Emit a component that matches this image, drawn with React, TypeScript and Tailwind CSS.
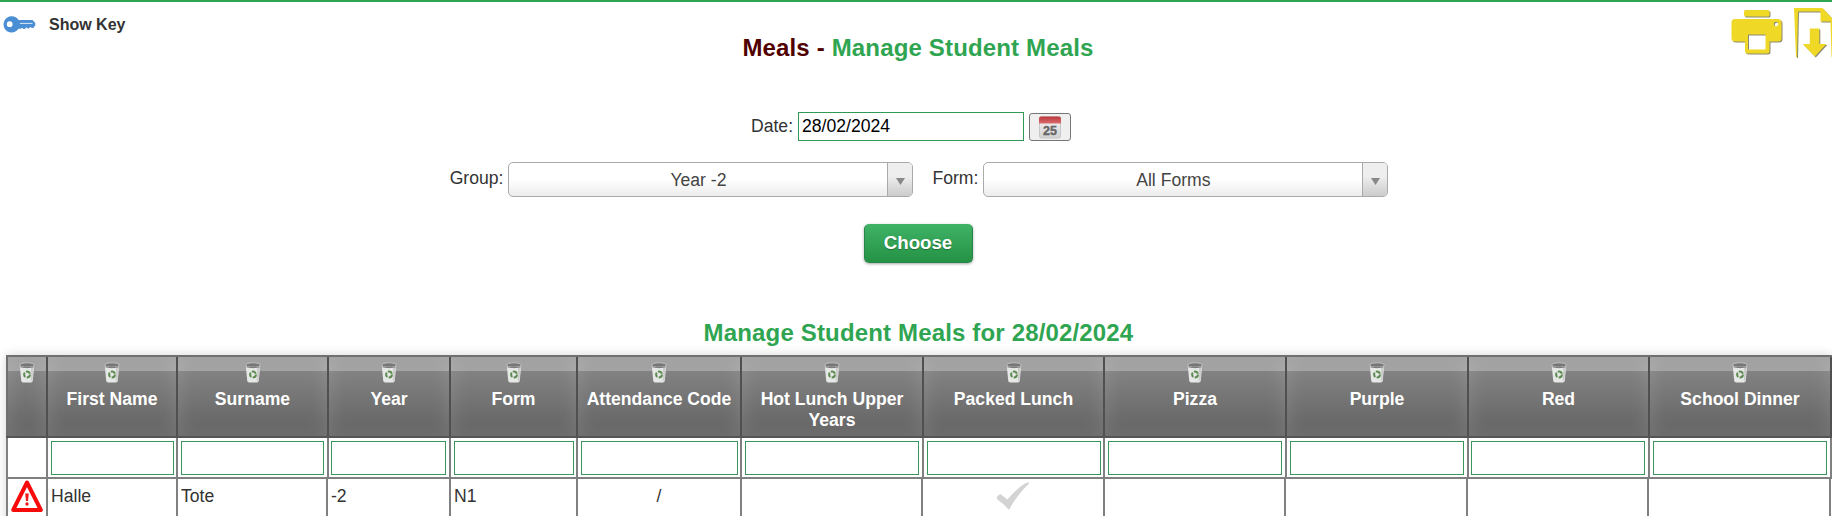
import { clsx } from "clsx";

const columns = [
  { title: "", value: "warning", filter: "" },
  { title: "First Name", value: "Halle", filter: "ml-[3px] mr-[2px]" },
  { title: "Surname", value: "Tote", filter: "mx-[3px]" },
  { title: "Year", value: "-2", filter: "ml-[2px] mr-[3px]" },
  { title: "Form", value: "N1", filter: "ml-[3px] mr-[2px]" },
  { title: "Attendance Code", value: "/", filter: "ml-[3px] mr-[2px]", center: true },
  { title: "Hot Lunch Upper Years", value: "", filter: "mx-[3px]" },
  { title: "Packed Lunch", value: "tick", filter: "ml-[3px] mr-[2px]", center: true },
  { title: "Pizza", value: "", filter: "mx-[3px]" },
  { title: "Purple", value: "", filter: "mx-[3px]" },
  { title: "Red", value: "", filter: "ml-[2px] mr-[3px]" },
  { title: "School Dinner", value: "", filter: "mx-[3px]" },
];

const headCols =
  "grid grid-cols-[40px_130px_151px_122px_127px_164px_182px_181px_182px_182px_181px_184px]";
const bodyCols =
  "grid grid-cols-[40px_130px_150px_123px_127px_164px_181px_182px_181px_182px_181px_184px]";

function KeyIcon() {
  return (
    <svg width="33" height="17" viewBox="0 0 33 17" fill="#4a8fd4">
      <path
        fillRule="evenodd"
        d="M8.3.3a8 8 0 0 1 7.2 3.7H29.500l2.800 3V9.300l-2 2.700h-1.500l-1.500-1-1.500 1.500h-1.200l-1.200-1.300-1.600 1.700h-1.400l-1.300-1.200-1.300 1H15.500A8.100 8.100 0 1 1 8.300.3ZM6.700 5.300a2.900 2.900 0 1 0 0 5.800 2.900 2.900 0 0 0 0-5.800Z"
      />
      <path d="M17 7.400h12.500" stroke="#dbe9f7" strokeWidth="1" />
    </svg>
  );
}

function PrinterIcon() {
  return (
    <svg width="52" height="47" viewBox="0 0 52 47" className="mt-[2px] drop-shadow-[1px_1px_0.500px_#8a8a70]">
      <g fill="#f0d926">
        <rect x="13" y="0" width="25.500" height="6.500" rx="1.500" />
        <path
          fillRule="evenodd"
          d="M4 9h43a3.500 3.500 0 0 1 3.500 3.500V28a3.500 3.500 0 0 1-3.500 3.500h-8.500V41a2.500 2.500 0 0 1-2.500 2.500H16.500A2.500 2.500 0 0 1 14 41v-9.500H4A3.500 3.500 0 0 1 .5 28V12.500A3.500 3.500 0 0 1 4 9Zm13 15.500V39.500h17.500v-15Zm28-12.700a2.200 2.200 0 1 0 0 4.400 2.200 2.200 0 0 0 0-4.400Z"
        />
      </g>
    </svg>
  );
}

function DownloadIcon() {
  return (
    <svg width="38" height="52" viewBox="0 0 38 52" className="drop-shadow-[1px_1px_0.500px_#8a8a70]">
      <g fill="#f0d926">
        <path d="M0 0h28.500l11 12v37h-2L36.500 13.500H26.500V3.500H4L3 49H2Z" />
        <path d="M15.800 20.500h9.500v15.500h7L20.800 48.500 8.800 36h7Z" />
      </g>
    </svg>
  );
}

function CalendarIcon() {
  return (
    <svg width="24" height="23" viewBox="0 0 24 23">
      <defs>
        <linearGradient id="calTop" x1="0" y1="0" x2="0" y2="1">
          <stop offset="0" stopColor="#b8383c" />
          <stop offset="1" stopColor="#dc6b6d" />
        </linearGradient>
        <linearGradient id="calPage" x1="0" y1="0" x2="0" y2="1">
          <stop offset="0" stopColor="#f6f6f6" />
          <stop offset="1" stopColor="#d2d2d2" />
        </linearGradient>
      </defs>
      <rect x="1.500" y="1" width="21" height="21" rx="2" fill="url(#calPage)" stroke="#c6c6c6" />
      <path d="M1 7.500V2.500Q1 .5 3 .5h18q2 0 2 2v5Z" fill="url(#calTop)" />
      <text
        x="12"
        y="19"
        textAnchor="middle"
        fontSize="12.500"
        fontWeight="700"
        fill="#666"
        stroke="#666"
        strokeWidth="0.400"
        fontFamily="Liberation Sans, sans-serif"
      >
        25
      </text>
    </svg>
  );
}

function BinIcon() {
  return (
    <svg width="16" height="21" viewBox="0 0 16 21" className="block">
      <path d="M.8 3.500 2.200 18.500q.2 2 2 2h7.600q1.800 0 2-2L15.200 3.500Z" fill="#e6e8e6" />
      <path d="M12 5h2.700l-1.300 13.500-1.600 1Z" fill="#cbcdcb" />
      <ellipse cx="8" cy="3" rx="7.400" ry="2.200" fill="#777" stroke="#c4c4c4" strokeWidth="0.900" />
      <path d="M1.500 4.900q6.500 1.600 13 0" stroke="#777" fill="none" />
      <circle cx="8" cy="12.500" r="2.900" fill="none" stroke="#5c8a50" strokeWidth="2" strokeDasharray="4.800 1.270" />
    </svg>
  );
}

function WarningIcon() {
  return (
    <svg width="32" height="33" viewBox="0 0 32 33" className="block">
      <path d="M16 2.500 29.800 30H2.200Z" fill="#fff" stroke="#f60a0a" strokeWidth="4" strokeLinejoin="round" />
      <path d="M14.200 13.500h3.600l-.8 7.500h-2Z" fill="#f01818" />
      <circle cx="16" cy="24" r="1.700" fill="#f01818" />
    </svg>
  );
}

function TickIcon() {
  return (
    <svg width="32" height="28" viewBox="0 0 32 28" className="block">
      <path d="M0 14.500 3.300 12 10.500 17.500Q18 8 28 1.500L32 0 31.500 2Q20 13 12 28Q6.500 21.500 0 17Z" fill="#d3d3d3" />
    </svg>
  );
}

function Select({ value }: { value: string }) {
  return (
    <div className="flex h-[35px] w-[405px] overflow-hidden rounded-[5px] border border-[#aaa] bg-gradient-to-b from-white from-50% to-[#ececec] text-[#444]">
      <div className="flex flex-1 items-center justify-center pt-px">{value}</div>
      <div className="flex w-[25px] items-center justify-center border-l border-[#aaa] bg-gradient-to-b from-[#eee] from-40% to-[#ccc] pt-[3px]">
        <svg width="9" height="7" viewBox="0 0 9 7">
          <path d="M0 0h9L4.500 7Z" fill="#888" />
        </svg>
      </div>
    </div>
  );
}

function Cell({ value }: { value: string }) {
  if (value === "warning") return <WarningIcon />;
  if (value === "tick") return <TickIcon />;
  return <span>{value}</span>;
}

export default function App() {
  return (
    <div className="h-[516px] w-[1832px] overflow-hidden border-t-2 border-[#2fa551] bg-white font-['Liberation_Sans',Arial,sans-serif] text-[17.600px] leading-[21px] text-[#333]">
      <header className="flex h-[88px] justify-between">
        <div className="flex w-[400px] items-start pl-[3px] pt-[14px]">
          <KeyIcon />
          <span className="ml-[13px] text-[16px] leading-[18px] font-bold">Show Key</span>
        </div>
        <h1 className="pt-[32px] pl-[4px] text-[24px] leading-[28px] font-bold tracking-[0.160px] text-[#2fa551]">
          <span className="text-[#500000]">Meals - </span>Manage Student Meals
        </h1>
        <div className="flex w-[400px] items-start justify-end gap-[11px] pt-[6px]">
          <PrinterIcon />
          <DownloadIcon />
        </div>
      </header>

      <form className="flex flex-col items-center">
        <div className="flex h-[72px] items-start gap-[5px] pt-[22px] pr-[10px]">
          <label className="pt-[4px]">Date:</label>
          <input
            className="h-[29px] w-[226px] border border-[#2f9a55] px-[3px] text-black outline-none"
            defaultValue="28/02/2024"
          />
          <button type="button" className="mt-px flex h-[28px] w-[42px] items-center justify-center rounded-[3px] border border-[#767676] bg-[#efefef]">
            <CalendarIcon />
          </button>
        </div>
        <div className="flex h-[62px] items-start pl-[6px]">
          <label className="mr-[5px] pt-[6px]">Group:</label>
          <Select value="Year -2" />
          <label className="mr-[5px] ml-[19px] pt-[6px]">Form:</label>
          <Select value="All Forms" />
        </div>
        <button
          type="button"
          className="ml-[4px] h-[39px] w-[109px] rounded-[5px] border border-[#27874a] border-t-[#3fb363] bg-gradient-to-b from-[#3fb265] to-[#259245] pb-[2px] text-[18.700px] font-bold text-white shadow-[0_1px_3px_rgba(0,0,0,0.350)] [text-shadow:0_1px_1px_rgba(0,0,0,0.300)]"
        >
          Choose
        </button>
      </form>

      <h2 className="mt-[56px] h-[36px] pl-[5px] text-center text-[24px] leading-[28px] font-bold tracking-[0.160px] text-[#2fa551]">
        Manage Student Meals for 28/02/2024
      </h2>

      <section className="ml-[6px] w-[1826px] shadow-[0_0_10px_rgba(0,0,0,0.160)]">
        <div className={clsx(headCols, "h-[83px] border-y-2 border-t-[#707070] border-b-[#555]")}>
          {columns.map((col) => (
            <div
              key={col.title}
              className="border-l-2 border-[#505050] first:border-[#707070] last:border-r-2"
            >
              <div className="flex h-full flex-col items-center bg-[linear-gradient(#9c9c9c_0px,#a3a3a3_14px,#828282_14px,#626262_100%)] pt-[5px] text-center font-bold text-white shadow-[inset_0_0_20px_rgba(255,255,255,0.140)]">
                <BinIcon />
                <span className="mt-[6px] w-[150px]">{col.title}</span>
              </div>
            </div>
          ))}
        </div>
        <div className={clsx(headCols, "h-[41px] border-b-2 border-[#808080] bg-white")}>
          {columns.map((col) => (
            <div key={col.title} className="flex border-l-2 border-[#808080] pt-[3px] last:border-r-2">
              {col.title && (
                <input className={clsx("h-[34px] min-w-0 flex-1 border border-[#3a975b] outline-none", col.filter)} />
              )}
            </div>
          ))}
        </div>
        <div className={clsx(bodyCols, "h-[60px] bg-white")}>
          {columns.map((col) => (
            <div
              key={col.title}
              className={clsx(
                "flex border-l-2 border-[#808080] last:border-r-2",
                col.value === "warning" && "pl-[3px] pt-px",
                col.value === "tick" && "pt-[3px]",
                col.value.length < 6 && col.value !== "tick" && "pt-[7px]",
                col.center ? "justify-center" : "pl-[3px]",
              )}
            >
              <Cell value={col.value} />
            </div>
          ))}
        </div>
      </section>
    </div>
  );
}
